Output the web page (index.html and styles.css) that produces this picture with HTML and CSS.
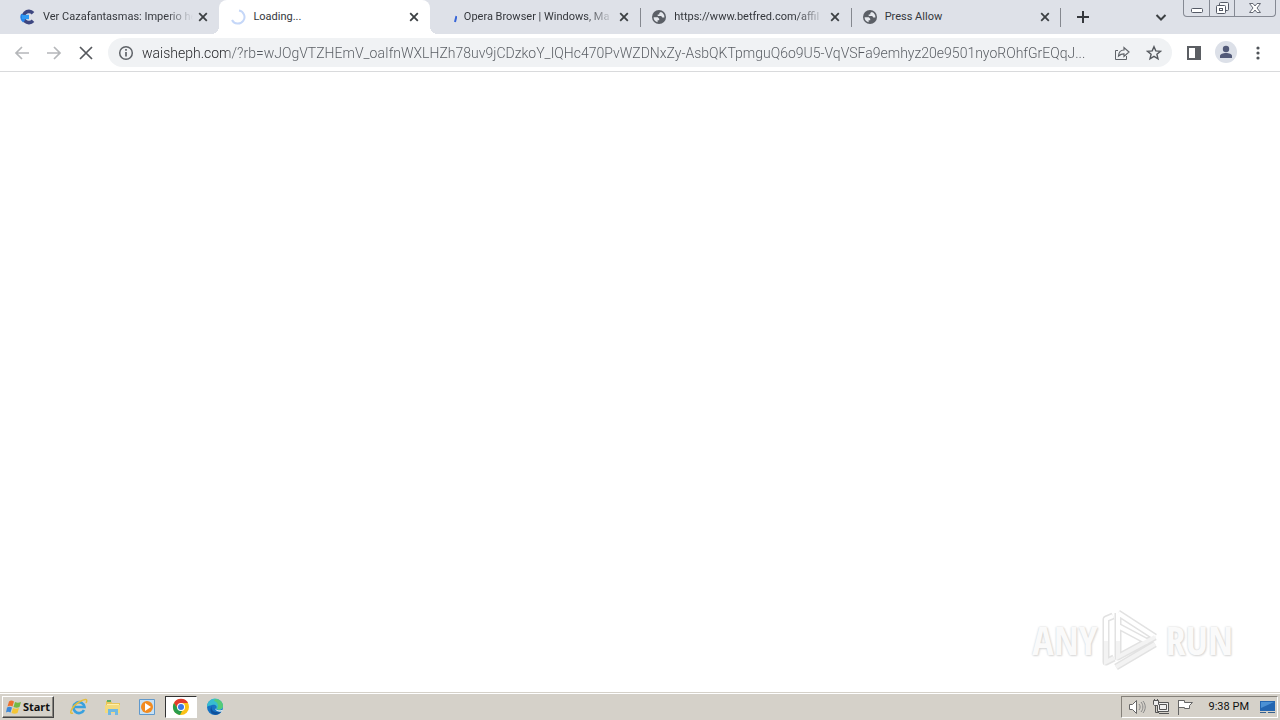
FILE: index.html
```html
<!DOCTYPE html>
<html lang="en">
<head>
<meta charset="utf-8">
<meta name="viewport" content="width=device-width, initial-scale=1">
<title>Loading...</title>
<link rel="stylesheet" href="styles.css">
</head>
<body>
<svg class="defs" aria-hidden="true">
  <symbol id="close" viewBox="0 0 10 10"><path d="M1.2 1.2l7.6 7.6M8.8 1.2L1.2 8.8" stroke="#3c4043" stroke-width="1.800"/></symbol>
  <symbol id="globe" viewBox="0 0 16 16"><circle cx="8" cy="8" r="7" fill="#5b5f66"/><path d="M2.6 8.2h4.2l1.4 1.6v1.5H6.6v1.9C4.200 12.700 2.500 10.700 2.600 8.200zM9.800 3.100l-1.500 1v1.400H6.700v1.400h3.500l1.100 1.500h2.100c.3-2.200-1.200-4.500-3.600-5.300z" fill="#e6e9ee"/></symbol>
</svg>
<header>
  <div class="strip">
    <div class="tabs" role="tablist">
      <div class="tab" role="tab">
        <svg class="fav" viewBox="0 0 16 16"><path d="M13 4.200A5.600 5.600 0 1 0 13 11.800" fill="none" stroke="#3d4680" stroke-width="3.600"/><path d="M4.200 12.200A5.600 5.600 0 0 1 2.800 5.500" fill="none" stroke="#2580e8" stroke-width="3.600"/><path d="M2 6l7-.2v4.400L2 10z" fill="#2e9af5"/></svg>
        <span class="title fade">Ver Cazafantasmas: Imperio he</span>
        <button class="close" aria-label="Close tab"><svg><use href="#close"/></svg></button>
      </div>
      <div class="tab active" role="tab" aria-selected="true">
        <svg class="fav" viewBox="0 0 16 16"><path d="M9 1.500A6.600 6.600 0 1 1 2 11" fill="none" stroke="#c5d7f8" stroke-width="2"/></svg>
        <span class="title">Loading...</span>
        <button class="close" aria-label="Close tab"><svg><use href="#close"/></svg></button>
      </div>
      <div class="tab" role="tab">
        <svg class="fav" viewBox="0 0 16 16"><path d="M15.500 7l-1.500 6" stroke="#3765d8" stroke-width="2"/></svg>
        <span class="title fade">Opera Browser | Windows, Ma</span>
        <button class="close" aria-label="Close tab"><svg><use href="#close"/></svg></button>
      </div>
      <div class="tab ruled" role="tab">
        <svg class="fav"><use href="#globe"/></svg>
        <span class="title fade">https://www.betfred.com/affil</span>
        <button class="close" aria-label="Close tab"><svg><use href="#close"/></svg></button>
      </div>
      <div class="tab ruled last" role="tab">
        <svg class="fav"><use href="#globe"/></svg>
        <span class="title">Press Allow</span>
        <button class="close" aria-label="Close tab"><svg><use href="#close"/></svg></button>
      </div>
    </div>
    <button class="new" aria-label="New tab"><svg viewBox="0 0 12 12"><path d="M6 0v12M0 6h12" stroke="#35383d" stroke-width="2"/></svg></button>
    <button class="search" aria-label="Search tabs"><svg viewBox="0 0 12 12"><path d="M1.500 4L6 8.500 10.500 4" fill="none" stroke="#3c4043" stroke-width="2"/></svg></button>
    <div class="window">
      <button aria-label="Minimize"><svg viewBox="0 0 24 16"><rect x="6.500" y="8.500" width="11" height="4" rx="1" fill="#fff" stroke="#555a66"/></svg></button>
      <button aria-label="Restore"><svg viewBox="0 0 24 16"><rect x="9.500" y="2.500" width="9" height="8" rx="1" fill="#f5f6f8" stroke="#555a66"/><rect x="6.500" y="5.500" width="9" height="8" rx="1" fill="#fff" stroke="#555a66"/><rect x="9.500" y="8.500" width="3" height="2" fill="#fff" stroke="#555a66"/></svg></button>
      <button class="wide" aria-label="Close"><svg viewBox="0 0 24 16"><path d="M6.500 3.500h3.500l2 2.500 2-2.500h3.500L14 8l3.500 4.500H14L12 10l-2 2.500H6.500L10 8z" fill="#fff" stroke="#666a75"/></svg></button>
    </div>
  </div>
  <div class="toolbar">
    <div class="nav">
      <button aria-label="Back"><svg viewBox="0 0 16 16"><path d="M15 8H2M8 2L2 8l6 6" fill="none" stroke="#b5b7ba" stroke-width="1.700"/></svg></button>
      <button aria-label="Forward"><svg viewBox="0 0 16 16"><path d="M1 8h13M8 2l6 6-6 6" fill="none" stroke="#b5b7ba" stroke-width="1.700"/></svg></button>
      <button aria-label="Stop"><svg viewBox="0 0 16 16"><path d="M2 2l12 12M14 2L2 14" stroke="#55585d" stroke-width="1.700"/></svg></button>
    </div>
    <div class="omnibox">
      <button aria-label="Site information"><svg viewBox="0 0 16 16"><circle cx="8" cy="8" r="6.300" fill="none" stroke="#5f6368" stroke-width="1.500"/><path d="M8 7v4.500M8 4v1.700" stroke="#5f6368" stroke-width="1.700"/></svg></button>
      <input type="text" aria-label="Address" spellcheck="false" value="waisheph.com/?rb=wJOgVTZHEmV_oaIfnWXLHZh78uv9jCDzkoY_IQHc470PvWZDNxZy-AsbQKTpmguQ6o9U5-VqVSFa9emhyz20e9501nyoROhfGrEQqJ...">
      <button aria-label="Share"><svg viewBox="0 0 16 16"><path d="M4 5.500H1.500v9h11V11" fill="none" stroke="#5f6368"/><path d="M4.500 11c.3-4 2.300-6 5.500-6V2.500L15 7l-5 4.500V8.800C7.500 8.800 6 9.500 4.500 11z" fill="none" stroke="#5f6368" stroke-width="1.200"/></svg></button>
      <button aria-label="Bookmark"><svg viewBox="0 0 16 16"><path d="M8 1.700l1.800 4.200 4.700.4-3.600 3 1.100 4.500L8 11.400l-4 2.400 1.100-4.500-3.600-3 4.700-.4z" fill="none" stroke="#55595e" stroke-width="1.400"/></svg></button>
    </div>
    <div class="actions">
      <button aria-label="Side panel"><svg viewBox="0 0 16 16"><path d="M1 1h14v14H1zM3 3v10h6V3z" fill="#5b5e63" fill-rule="evenodd"/></svg></button>
      <button class="avatar" aria-label="Profile"><svg viewBox="0 0 16 16"><circle cx="8" cy="5" r="3.200" fill="#525a78"/><path d="M2 14v-2c0-4 12-4 12 0v2z" fill="#525a78"/></svg></button>
      <button aria-label="Menu"><svg viewBox="0 0 16 16" fill="#505459"><circle cx="8" cy="3" r="1.600"/><circle cx="8" cy="8" r="1.600"/><circle cx="8" cy="13" r="1.600"/></svg></button>
    </div>
  </div>
</header>
<main>
  <div class="watermark" aria-label="ANY RUN">
    <span>ANY</span>
    <svg viewBox="0 0 60 64" fill="none"><g stroke="#e2e2e2" stroke-width="7" stroke-linejoin="round"><path d="M12 8L5 11v43l8-4M17 5v44l37-20M15 59l39-23M17 5l37 24M17 18l30 16"/></g><g stroke="#fff" stroke-width="4" stroke-linejoin="round"><path d="M12 8L5 11v22M17 5v28M17 5l37 24M17 18l30 16"/></g><path d="M5 33v21l8-4M17 33v16l37-20M15 59l39-23" stroke="#f3f3f3" stroke-width="4"/></svg>
    <span>RUN</span>
  </div>
</main>
<footer>
  <button class="start"><svg viewBox="0 0 16 16"><path d="M3 2.500c2-1.500 3-1 5 0L6.500 7.500c-2-1-3-1-5 0z" fill="#ed702d"/><path d="M9 3c2 1 3.500 1 6 0L13.500 8c-2 1-3.500 1-6 0z" fill="#74b944"/><path d="M1 8.500c2-1 3-1 5 0L4.500 13.500c-2-1-3-1-4.500 0z" fill="#3c88d9"/><path d="M7 9c2 1 3.500 1 6 0l-1.500 5c-2 1-3.500 1-6 0z" fill="#f4c536"/></svg>Start</button>
  <nav class="apps">
    <button aria-label="Internet Explorer"><svg viewBox="0 0 18 18"><path d="M14 12A5.500 5.500 0 1 1 14.500 9H5" fill="none" stroke="#39a1df" stroke-width="2.600"/><path d="M3 15C-2 17 2 8 9 4s9-3 7 1" fill="none" stroke="#e4bd3d" stroke-width="1.500"/></svg></button>
    <button aria-label="Explorer"><svg viewBox="0 0 18 18"><path d="M2 3h5l1 2h8v9H2z" fill="#e9c65b"/><path d="M3 2h4v2H3z" fill="#5eae62"/><path d="M3 6h12v5H3z" fill="#fff0a8"/><path d="M1 7h15v8H1z" fill="#f3da7e"/><path d="M4 17v-6h10v6h-3v-3H7v3z" fill="#70b9e2"/></svg></button>
    <button aria-label="Media Player"><svg viewBox="0 0 18 18"><path d="M1.500 1.500h15v15h-15z" fill="#c7e1f5" stroke="#6099cc"/><circle cx="9" cy="9" r="6" fill="#f28b20"/><path d="M7 5l6 4-6 4z" fill="#fff"/></svg></button>
    <button class="pressed" aria-label="Chrome"><svg viewBox="0 0 18 18"><circle cx="9" cy="9" r="8" fill="#fbc116"/><path d="M2 5a8 8 0 0 1 14 0H9L6 11z" fill="#e33b2e"/><path d="M2 5l4 6 4 2-2 4A8 8 0 0 1 2 5z" fill="#299c4b"/><circle cx="9" cy="9" r="4" fill="#fff"/><circle cx="9" cy="9" r="3" fill="#3b78e7"/></svg></button>
    <button aria-label="Edge"><svg viewBox="0 0 18 18"><circle cx="9" cy="9" r="8" fill="#1672c3"/><path d="M1 9a8 8 0 0 1 16-1c0 4-4 5-7 3 2-3-1-5-4-4-2 .5-4 1-5 2z" fill="#37bdd0"/><path d="M9 1c6 0 8 4 8 7 0 3-4 4-6 3 2-3 1-7-3-8z" fill="#55cb78"/><path d="M6 8c-2 5 3 7 9 6-5 6-14 1-9-6z" fill="#0e509c"/><path d="M9 8c-1 3 2 5 7 4l1 1c-5 2-9-1-8-5z" fill="#e4eff0"/></svg></button>
  </nav>
  <div class="tray">
    <button aria-label="Volume"><svg viewBox="0 0 18 18" fill="#fff" stroke="#666"><path d="M1.500 6.500h3l4-4v13l-4-4h-3z"/><path d="M11 6c1.500 2 1.500 4 0 6M13 4c2.500 3 2.500 7 0 10M15 3c3 4 3 8 0 12" fill="none" stroke="#888"/></svg></button>
    <button aria-label="Network"><svg viewBox="0 0 18 18" fill="#eee" stroke="#555"><path d="M5.500 4.500h11v9h-11zM7.500 6.500h7v5h-7zM7 15.500h10"/><path d="M3.500 8v6.500H7" fill="none"/><path d="M1.500 2.500h5v4l-1 1h-3l-1-1zM2.500 1v2M5.500 1v2"/></svg></button>
    <button aria-label="Action Center"><svg viewBox="0 0 18 18" fill="#fff" stroke="#666"><path d="M2.500 2v15M2.500 2.500h6v2h8l-3 3 0 3h-5v-1h-6z"/></svg></button>
    <time>9:38 PM</time>
    <button aria-label="Show desktop"><svg viewBox="0 0 18 18"><path d="M2 3h15v10H2z" fill="#2466b1"/><path d="M3 4h13L3 10z" fill="#4c91d4"/><path d="M2 14h6v1H2zM10 14h7v1h-7z" fill="#38628e"/></svg></button>
  </div>
</footer>
</body>
</html>
```

FILE: styles.css
```css
* { box-sizing: border-box; }
body {
  margin: 0;
  min-height: 100vh;
  display: flex;
  flex-direction: column;
  background: #fff;
  color: #34373c;
  font: 11px/16px Roboto, "Noto Sans", sans-serif;
}
button {
  display: flex;
  align-items: center;
  justify-content: center;
  flex: none;
  padding: 0;
  border: 0;
  background: none;
  color: inherit;
  font: inherit;
}
svg { display: block; flex: none; width: 16px; height: 16px; }
.defs { position: absolute; width: 0; height: 0; }

.strip { display: flex; height: 34px; padding-left: 9px; padding-right: 4px; background: #dee1e8; }
.tabs { display: flex; flex: 0 1 1052px; min-width: 0; }
.tab {
  position: relative;
  display: flex;
  align-items: center;
  flex: 1 1 0;
  min-width: 0;
  padding: 0 10px 0 11px;
}
.tab.active { background: #fff; border-radius: 8px 8px 0 0; }
.tab.active::before, .tab.active::after {
  content: "";
  position: absolute;
  bottom: 0;
  width: 8px;
  height: 8px;
}
.tab.active::before { right: 100%; background: radial-gradient(circle at 0 0, #dee1e8 8px, #fff 8px); }
.tab.active::after { left: 100%; background: radial-gradient(circle at 100% 0, #dee1e8 8px, #fff 8px); }
.tab.ruled { background: linear-gradient(#85888f, #85888f) left center / 1px 19px no-repeat; }
.tab.last { background: linear-gradient(#85888f, #85888f) left center / 1px 19px no-repeat, linear-gradient(#85888f, #85888f) right center / 1px 19px no-repeat; }
.title {
  flex: 1;
  min-width: 0;
  margin-left: 7px;
  margin-right: 2px;
  overflow: hidden;
  white-space: nowrap;
}
.title.fade {
  -webkit-mask-image: linear-gradient(90deg, #000 calc(100% - 30px), transparent calc(100% - 2px));
  mask-image: linear-gradient(90deg, #000 calc(100% - 30px), transparent calc(100% - 2px));
}
.close { width: 12px; height: 16px; }
.close svg { width: 10px; height: 10px; }
.new { width: 44px; }
.new svg, .search svg { width: 12px; height: 12px; }
.search { width: 24px; margin-left: auto; margin-right: 10px; }
.window {
  display: flex;
  height: 17px;
  border: 1px solid #858993;
  border-top: 0;
  border-radius: 0 0 4px 4px;
}
.window button { width: 25px; }
.window button + button { border-left: 1px solid #858993; }
.window .wide { width: 41px; }
.window svg { width: 24px; }

.toolbar {
  display: flex;
  align-items: center;
  height: 38px;
  padding: 0 6px;
  border-bottom: 1px solid #d9dadc;
}
.nav, .actions { display: flex; }
.nav button, .actions button { width: 32px; height: 24px; }
.nav { margin-right: 6px; }
.actions { margin-left: 6px; }
.actions .avatar { width: 22px; height: 22px; margin: 0 5px; border-radius: 50%; background: #dce0e8; }
.omnibox {
  display: flex;
  align-items: center;
  flex: 1;
  min-width: 0;
  height: 29px;
  padding: 0 2px;
  border-radius: 15px;
  background: #f0f2f4;
}
.omnibox button { width: 32px; height: 28px; }
.omnibox input {
  flex: 1;
  min-width: 0;
  height: 24px;
  padding: 0;
  border: 0;
  outline: 0;
  background: linear-gradient(90deg, #202124 86px, #55595f 86px);
  -webkit-background-clip: text;
  background-clip: text;
  color: transparent;
  font: 300 14px/24px Roboto, "Noto Sans", sans-serif;
}

main { display: flex; flex: 1; align-items: flex-end; justify-content: flex-end; padding: 20px 47px; }
.watermark {
  display: flex;
  align-items: center;
  gap: 4px;
  color: #fafafa;
  font: 300 40px/60px "Open Sans Condensed", "Liberation Sans Narrow", "Roboto", sans-serif;
  text-shadow: 0 0 2px #ccc, 1px 1px 2px #ddd;
}
.watermark svg { width: 60px; height: 64px; }

footer {
  display: flex;
  align-items: center;
  height: 28px;
  padding: 0 2px;
  border-top: 1px solid #d5d1c9;
  box-shadow: inset 0 1px #fff;
  background: #d5d1c9;
  color: #111;
}
.start {
  gap: 1px;
  width: 52px;
  height: 22px;
  border: 1px solid;
  border-color: #fff #444 #444 #fff;
  box-shadow: inset -1px -1px #88857f;
  font: bold 11px/16px "Noto Sans", "Open Sans", sans-serif;
}
.apps { display: flex; gap: 2px; margin-left: 9px; }
.apps button { width: 32px; height: 22px; }
.apps svg { width: 18px; height: 18px; }
.apps .pressed { border: 1px solid; border-color: #333 #fff #fff #333; background: #fff; }
.tray {
  display: flex;
  align-items: center;
  height: 22px;
  margin-left: auto;
  padding-left: 3px;
  border: 1px solid;
  border-color: #85817a #fff #fff #85817a;
}
.tray button { width: 24px; height: 20px; }
.tray svg { width: 18px; height: 18px; }
.tray time { margin: 0 8px 0 12px; }
.tray time + button { width: 20px; }
```
